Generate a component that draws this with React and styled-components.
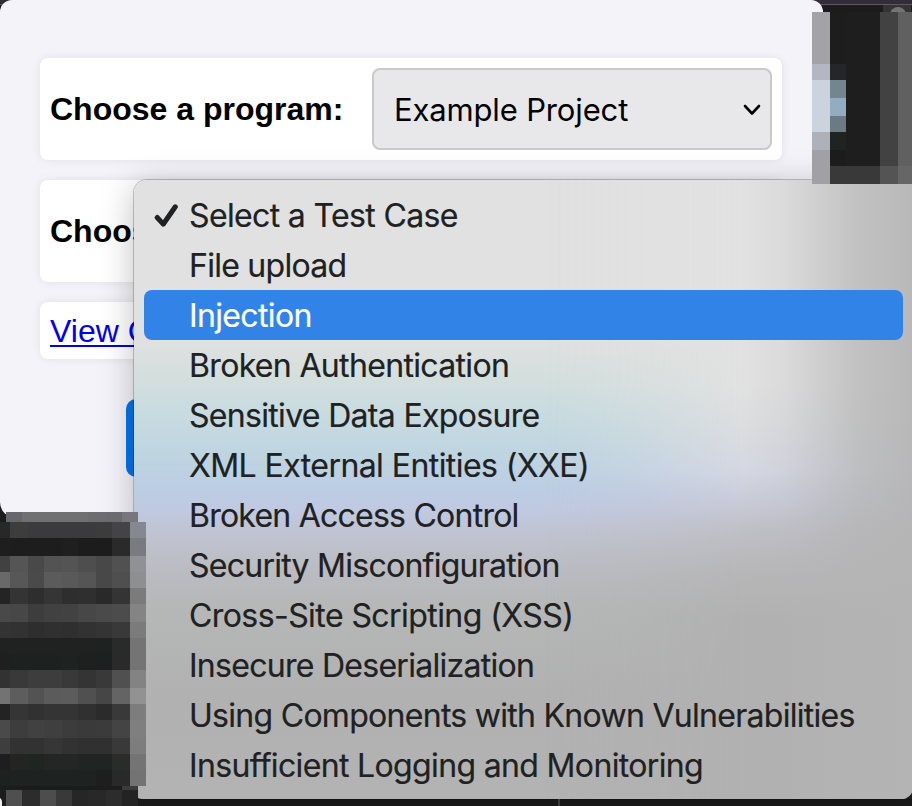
import React from "react";
import styled, { createGlobalStyle } from "styled-components";

const GlobalStyle = createGlobalStyle`
  *, *::before, *::after { box-sizing: border-box; }
  html, body { margin: 0; padding: 0; background: #1c1c1c; overflow: hidden; }
`;

const Desktop = styled.main`
  position: relative;
  width: 912px;
  height: 806px;
  overflow: hidden;
  background: linear-gradient(#302d38 0, #302d38 4px, #5c5966 4px, #5c5966 5px, #1c1c1c 5px);
  font-family: "Liberation Sans", Arial, sans-serif;
`;

const Popup = styled.section`
  width: 823px;
  height: 518px;
  padding: 58px 41px 0 40px;
  display: flex;
  flex-direction: column;
  gap: 20px;
  align-items: stretch;
  background: #f4f3f9;
  border-radius: 12px 12px 16px 16px;
`;

const Card = styled.div`
  display: flex;
  align-items: center;
  justify-content: space-between;
  flex: none;
  height: ${(p) => p.$height}px;
  padding: 0 10px;
  background: #fff;
  border-radius: 8px;
  box-shadow: 0 0 10px rgba(0, 0, 0, 0.08);
`;

const Label = styled.label`
  font-size: 32px;
  font-weight: 700;
  line-height: 40px;
  color: #000;
  white-space: nowrap;
`;

const SelectBox = styled.div`
  display: flex;
  align-items: center;
  justify-content: space-between;
  width: 400px;
  height: 82px;
  padding: 1px 9px 0 20px;
  border: 2px solid #c9c9c9;
  border-radius: 8px;
  background: #e8e8ea;
  font-family: Inter, sans-serif;
  font-size: 31px;
  letter-spacing: -0.15px;
  color: #000;
`;

const TextLink = styled.a`
  color: #0000ee;
  font-size: 32px;
  line-height: 38px;
  text-decoration: underline;
  text-decoration-thickness: 2px;
  text-underline-offset: 3px;
  white-space: nowrap;
`;

const Submit = styled.button`
  flex: none;
  align-self: center;
  width: 571px;
  height: 78px;
  margin-top: 20px;
  border: 0;
  border-radius: 10px;
  background: #0573ee;
`;

const Menu = styled.ul`
  position: absolute;
  left: 134px;
  top: 180px;
  width: 779px;
  height: 619px;
  margin: 0;
  padding: 10px 10px 0;
  list-style: none;
  overflow: hidden;
  border-radius: 13px 0 12px 8px;
  isolation: isolate;
  background: linear-gradient(
    #e1e1e1 0, #e1e1e1 140px, #dee1e0 165px, #d3dfdd 200px, #c7dbe0 235px,
    #bed5e1 275px, #bccde4 310px, #c0c9e1 330px, #c0c3d0 355px,
    #bbbcc2 390px, #b6b7b7 425px, #b1b1b1 520px, #b3b3b3 619px
  );
`;

const MenuShadow = styled.div`
  position: absolute;
  left: 134px;
  top: 180px;
  width: 790px;
  height: 619px;
  border-radius: 13px 0 12px 8px;
  box-shadow: 0 0 0 1px rgba(0, 0, 0, 0.2), 0 6px 34px rgba(0, 0, 0, 0.26);
`;

const Glow = styled.div`
  position: absolute;
  inset: 0;
  z-index: -1;
  background: ${(p) => p.$paint};
  -webkit-mask-image: ${(p) => p.$mask || "none"};
  mask-image: ${(p) => p.$mask || "none"};
`;

const MenuItem = styled.li`
  display: flex;
  align-items: center;
  height: 50px;
  padding: 1px 0 0 10px;
  border-radius: 8px;
  background: ${(p) => (p.$active ? "#3183e8" : "transparent")};
  color: ${(p) => (p.$active ? "#fff" : "#202122")};
  font-family: Inter, sans-serif;
  font-size: 32px;
  line-height: 39px;
  -webkit-text-stroke: 0.2px currentColor;
  letter-spacing: ${(p) => p.$spacing}px;
  white-space: nowrap;
`;

const CheckSlot = styled.span`
  flex: none;
  display: flex;
  width: 35px;
  height: 28px;
`;

const Mosaic = styled.div`
  position: absolute;
  left: ${(p) => p.$left}px;
  top: ${(p) => p.$top}px;
  display: grid;
  grid-template-columns: ${(p) => p.$columns};
  grid-template-rows: ${(p) => p.$rows};
`;

const Pixel = styled.i`
  background: ${(p) => p.$color};
`;

const Knob = styled.div`
  position: absolute;
  left: 883px;
  top: 5px;
  width: 28px;
  height: 20px;
  overflow: hidden;
  background: #343434;
  &::before {
    content: "";
    display: block;
    width: 16px;
    height: 16px;
    margin: 2px 0 0 7px;
    border-radius: 50%;
    background: #747474;
  }
`;

const Corner = styled.div`
  position: absolute;
  left: -8px;
  top: 797px;
  width: 10px;
  height: 12px;
  border-radius: 0 5px 0 0;
  background: #f2f2f2;
`;

const FloorLine = styled.div`
  position: absolute;
  left: 558px;
  top: 799px;
  width: 2px;
  height: 7px;
  background: #3c3c3c;
`;

const options = [
  ["Select a Test Case", -0.64],
  ["File upload", -0.74],
  ["Injection", -0.64],
  ["Broken Authentication", -0.66],
  ["Sensitive Data Exposure", -0.68],
  ["XML External Entities (XXE)", -0.57],
  ["Broken Access Control", -0.76],
  ["Security Misconfiguration", -0.74],
  ["Cross-Site Scripting (XSS)", -0.57],
  ["Insecure Deserialization", -0.72],
  ["Using Components with Known Vulnerabilities", -0.71],
  ["Insufficient Logging and Monitoring", -0.65],
];

const mosaics = [
  {
    left: 812, top: 12,
    columns: "18px 16px 34px 18px 14px",
    rows: "52px 16px 18px 18px 16px 18px 16px 18px",
    cells: [
      "a3a2a7 1c1d1c 1e1e1e 424242 606060",
      "b4b7c1 242628 1e1e1e 424242 606060",
      "cbd3df 738690 1e1e1e 424242 606060",
      "cbd3df 91adbf 1e1e1e 424242 606060",
      "cbd3df 6b7b83 1e1e1e 424242 606060",
      "aeb1b9 1f2321 1e1e1e 424242 606060",
      "a1a0a5 1b1c1b 1e1e1e 424242 606060",
      "a1a0a5 393939 393939 545454 666666",
    ],
  },
  {
    left: 6, top: 512,
    columns: "16px 66px 18px 16px 16px",
    rows: "10px",
    cells: ["67666c 707072 6d6c70 6b6a6f 77767c"],
  },
  {
    left: 0, top: 522,
    columns: "10px 18px 16px 18px 16px 18px 16px 18px 16px",
    rows: "16px 18px 16px 16px 16px 18px 16px 16px 16px 18px 16px 16px 18px 16px 16px",
    cells: [
      "262928 3d3d3d 3b3b3d 3b3b3e 3b3b3e 3b3b3d 3c3c3c 444446 858791",
      "1e1e1e 1d1d1d 1d1d1d 1d1d1d 1f1f1f 1c1c1c 1c1c1c 2a2a2a 7a7b80",
      "414141 555555 494949 535353 545454 4e4e4e 484848 515151 909194",
      "696969 575757 4a4a4a 5b5b5b 595959 555555 484848 4f4f4f 8e8f90",
      "242424 343434 2e2e2e 353535 2e2e2e 2f2f2f 292929 343434 7b7b7b",
      "494949 474747 3d3d3d 414141 424242 474747 4a4a4a 4c4c4c 848484",
      "333333 323232 2e2e2e 303030 2f2f2f 323232 343434 393939 7b7b7b",
      "202221 202221 202221 202221 202221 202221 1e2221 282b29 747474",
      "1f1f1f 1d2220 1d2220 1d2220 1e2220 1e1f1f 1c2020 292a29 747474",
      "323232 393939 3d3d3d 3d3d3d 393939 343434 393939 505050 838383",
      "737373 5d5d5d 535353 5b5b5b 5c5c5c 505050 464646 646464 929292",
      "232323 353535 313131 343434 343434 303030 2b2b2b 393939 7d7d7d",
      "4a4a4a 3d3d3d 414141 3f3f3f 3c3c3c 3a3a3a 3b3b3b 444444 7f7f7f",
      "3e3e3e 323232 323232 363636 323232 303030 303030 393939 7d7d7d",
      "1e1e1e 242423 202522 232624 232624 202422 202422 292d2a 747474",
    ],
  },
  {
    left: 0, top: 770,
    columns: "10px 86px 16px 18px 16px",
    rows: "16px",
    cells: ["1d2220 1e2220 1e1e1e 292929 737373"],
  },
  {
    left: 0, top: 786,
    columns: "122px 16px",
    rows: "4px",
    cells: ["1b1c1b 3b3b3b"],
  },
  {
    left: 6, top: 790,
    columns: "16px 18px 16px 16px 16px 18px 16px 16px",
    rows: "16px",
    cells: ["4f4f4f 2c2c2c 4d4d4d 393939 262626 282828 2c2c2c 232323"],
  },
];

function PixelPatch({ left, top, columns, rows, cells }) {
  return (
    <Mosaic $left={left} $top={top} $columns={columns} $rows={rows} aria-hidden="true">
      {cells.flatMap((row) => row.split(" ")).map((c, i) => (
        <Pixel key={i} $color={`#${c}`} />
      ))}
    </Mosaic>
  );
}

export default function App() {
  return (
    <>
      <GlobalStyle />
      <Desktop>
        <Popup>
          <Card $height={102}>
            <Label>Choose a program:</Label>
            <SelectBox>
              Example Project
              <svg width="18" height="12" viewBox="0 0 18 12" fill="none" stroke="#000" strokeWidth="2.6" strokeLinecap="round" strokeLinejoin="round">
                <path d="M2 2L9 9.5L16 2" />
              </svg>
            </SelectBox>
          </Card>
          <Card $height={102}>
            <Label>Choos</Label>
          </Card>
          <Card $height={57}>
            <TextLink href="#view">View C</TextLink>
          </Card>
          <Submit type="button" aria-label="Start" />
        </Popup>
        <Knob />
        <MenuShadow />
        <Menu>
          <Glow
            $paint="linear-gradient(#e1e1e1 0, #e1e1e1 205px, #dcdddf 245px, #d5d7e2 290px, #c9cbd8 320px, #bfbfc6 350px, #b6b6b7 395px, #b1b1b1 440px, #b1b1b1 619px)"
            $mask="linear-gradient(90deg, transparent 410px, rgba(0,0,0,.35) 500px, #000 610px)"
          />
          <Glow $paint="linear-gradient(90deg, rgba(180,180,184,0) 610px, rgba(180,180,184,.15) 650px, rgba(180,180,182,.4) 684px, rgba(180,180,180,.7) 724px, rgba(180,180,180,.9) 778px)" />
          {options.map(([text, spacing], i) => (
            <MenuItem key={text} $active={i === 2} $spacing={spacing}>
              <CheckSlot>
                {i === 0 && (
                  <svg width="26" height="30" viewBox="0 0 26 30" fill="none" stroke="#202122" strokeWidth="5" strokeLinecap="round" strokeLinejoin="round">
                    <path d="M3.2 15.5L9.2 22.2L21.3 4.8" />
                  </svg>
                )}
              </CheckSlot>
              {text}
            </MenuItem>
          ))}
        </Menu>
        <FloorLine />
        <Corner />
        {mosaics.map((m, i) => (
          <PixelPatch key={i} {...m} />
        ))}
      </Desktop>
    </>
  );
}
